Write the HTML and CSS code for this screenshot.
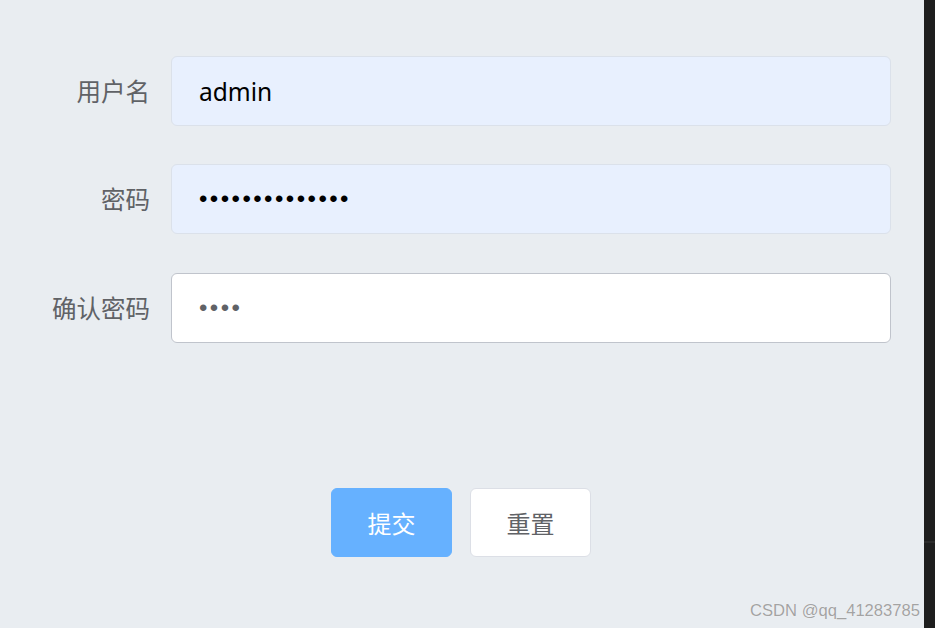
FILE: index.html
```html
<!DOCTYPE html>
<html lang="zh-CN">
<head>
<meta charset="utf-8">
<title>注册</title>
<link rel="stylesheet" href="styles.css">
</head>
<body>
<div class="page">
  <main class="main">
    <form class="form">
      <div class="row">
        <label class="label" for="u">用户名</label>
        <input id="u" class="input filled" type="text" value="admin">
      </div>
      <div class="row">
        <label class="label" for="p">密码</label>
        <input id="p" class="input filled pwd" type="password" value="12345678901234">
      </div>
      <div class="row">
        <label class="label" for="c">确认密码</label>
        <input id="c" class="input plain pwd grey" type="password" value="1234">
      </div>
      <div class="actions">
        <button type="button" class="btn primary">提交</button>
        <button type="button" class="btn">重置</button>
      </div>
    </form>
    <div class="watermark">CSDN @qq_41283785</div>
  </main>
  <aside class="side"><div class="side-line"></div></aside>
</div>
</body>
</html>
```
FILE: styles.css
```css
html, body {
  margin: 0;
  padding: 0;
  height: 100%;
}
body {
  font-family: "Noto Sans", "Noto Sans CJK SC", sans-serif;
  background: #e9edf1;
}
.page {
  display: flex;
  height: 628px;
}
.main {
  flex: 1;
  position: relative;
  background: #e9edf1;
}
.side {
  width: 11px;
  background: #1e1e1e;
  display: flex;
  flex-direction: column;
  padding-top: 541px;
  box-sizing: border-box;
}
.side-line {
  height: 2px;
  background: #2c2c2c;
}
.form {
  padding-top: 56px;
  display: flex;
  flex-direction: column;
}
.row {
  display: grid;
  grid-template-columns: 150px 720px;
  column-gap: 21px;
  align-items: center;
  margin-bottom: 38px;
}
.row:nth-child(2) {
  margin-bottom: 39px;
}
.label {
  text-align: right;
  font-size: 24.5px;
  color: #606266;
  font-family: "Noto Sans CJK SC", sans-serif;
  line-height: 1;
}
.input {
  height: 70px;
  box-sizing: border-box;
  border-radius: 6px;
  padding: 0 26px 0 27px;
  font-size: 24.5px;
  font-family: "Noto Sans", "Noto Sans CJK SC", sans-serif;
  color: #000;
  outline: none;
}
.filled {
  background: #e8f0fe;
  border: 1px solid #dbe1ea;
}
.plain {
  background: #ffffff;
  border: 1px solid #c0c4cc;
}
.pwd {
  font-family: "Liberation Sans", sans-serif;
  letter-spacing: 2.45px;
  font-size: 24px;
}
.grey {
  color: #606266;
}
.actions {
  display: flex;
  justify-content: center;
  gap: 18px;
  margin-top: 107px;
  padding-right: 2px;
}
.btn {
  width: 121px;
  height: 69px;
  border-radius: 6px;
  border: 1px solid #dcdfe6;
  background: #ffffff;
  color: #606266;
  font-size: 24px;
  font-family: "Noto Sans CJK SC", sans-serif;
  padding: 0;
}
.btn.primary {
  background: #66b1ff;
  border-color: #66b1ff;
  color: #ffffff;
}
.watermark {
  position: absolute;
  right: 4px;
  bottom: 7px;
  font-family: "Liberation Sans", sans-serif;
  font-size: 16.6px;
  color: #a3a3a3;
  text-shadow: 0 0 1px #ffffff;
}
```
